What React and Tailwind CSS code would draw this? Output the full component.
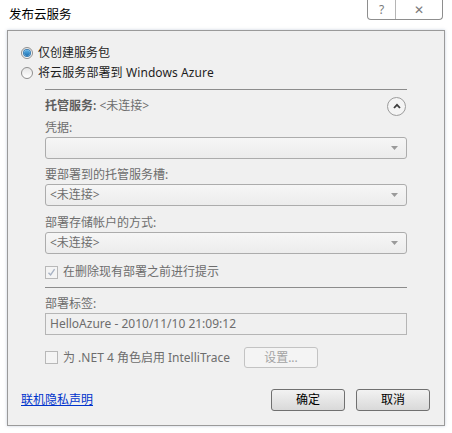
import React from "react";

const font = { fontFamily: '"Noto Sans", "Noto Sans CJK SC", sans-serif' };

function Radio({ checked }) {
  return (
    <span className="flex h-[12px] w-[12px] items-center justify-center rounded-full border border-[#8f8f8f] bg-gradient-to-b from-[#e6e6e6] to-[#ffffff]">
      {checked && (
        <span className="h-[6px] w-[6px] rounded-full bg-gradient-to-b from-[#5db3e8] to-[#1a6fb0] ring-1 ring-[#3a7fb5]" />
      )}
    </span>
  );
}

function Checkbox({ checked }) {
  return (
    <span className="flex h-[13px] w-[13px] items-center justify-center border border-[#b8b8b8] bg-[#f4f4f4]">
      {checked && (
        <svg width="9" height="9" viewBox="0 0 9 9">
          <path d="M1.5 4.8 L3.6 7 L7.6 1.2" fill="none" stroke="#a9b3c4" strokeWidth="1.4" />
        </svg>
      )}
    </span>
  );
}

function Select({ value }) {
  return (
    <div className="flex h-[22px] items-center justify-between rounded-[3px] border border-[#acacac] bg-gradient-to-b from-[#f6f6f6] to-[#ececec] pl-[4px] pr-[8px] text-[#6d6d6d]">
      <span>{value}</span>
      <svg width="7" height="4" viewBox="0 0 7 4">
        <path d="M0 0 H7 L3.5 4 Z" fill="#9a9a9a" />
      </svg>
    </div>
  );
}

export default function App() {
  return (
    <div className="relative h-[433px] w-[452px] bg-white text-[12px] leading-[18px]" style={font}>
      {/* title bar */}
      <div className="flex h-[30px] items-center pl-[9px] text-[12.5px] text-black">发布云服务</div>
      <div className="absolute right-[9px] top-0 flex h-[20px] w-[76px] rounded-b-[4px] border border-t-0 border-[#8e8e8e] bg-white text-[#7a7a7a]">
        <div className="flex w-[28px] items-center justify-center border-r border-[#b5b5b5] text-[12px]">?</div>
        <div className="flex flex-1 items-center justify-center text-[12px]">✕</div>
      </div>

      {/* client area */}
      <div className="absolute left-[7px] top-[30px] flex h-[396px] w-[438px] flex-col border border-[#9a9a9a] bg-[#f0f0f0] pl-[13px] pr-[14px] pt-[12px] shadow-[0_0_3px_rgba(120,140,170,0.4)]">
        <div className="flex h-[20px] items-center gap-[5px] text-[#1e1e1e]">
          <Radio checked />
          <span>仅创建服务包</span>
        </div>
        <div className="flex h-[20px] items-center gap-[5px] text-[#1e1e1e]">
          <Radio />
          <span className="tracking-[0.1px]">将云服务部署到 Windows Azure</span>
        </div>

        <div className="ml-[24px] w-[362px]">
          <div className="mt-[6px] h-px bg-[#8c8c8c]" />
          <div className="mt-[6px] flex h-[20px] items-center justify-between text-[#6d6d6d]">
            <span>
              <span className="font-semibold text-[#5e5e5e]">托管服务:</span> &lt;未连接&gt;
            </span>
            <span className="mr-[1px] flex h-[19px] w-[19px] items-center justify-center rounded-full border border-[#9c9c9c] bg-[#f4f4f4]">
              <svg width="8" height="6" viewBox="0 0 8 6">
                <path d="M1 5 L4 1.8 L7 5" fill="none" stroke="#3c3c3c" strokeWidth="1.8" />
              </svg>
            </span>
          </div>
          <div className="mt-[3px] text-[#6d6d6d]">凭据:</div>
          <Select value="" />
          <div className="mt-[7px] text-[#6d6d6d]">要部署到的托管服务槽:</div>
          <Select value="<未连接>" />
          <div className="mt-[8px] text-[#6d6d6d]">部署存储帐户的方式:</div>
          <Select value="<未连接>" />
          <div className="mt-[8px] flex h-[20px] items-center gap-[5px] text-[#6d6d6d]">
            <Checkbox checked />
            <span>在删除现有部署之前进行提示</span>
          </div>
          <div className="mt-[5px] h-px bg-[#8c8c8c]" />
          <div className="mt-[7px] text-[#6d6d6d]">部署标签:</div>
          <div className="flex h-[22px] items-center border border-[#b5b5b5] bg-[#f0f0f0] pl-[4px] text-[#6d6d6d]">
            HelloAzure - 2010/11/10 21:09:12
          </div>
        </div>

        <div className="ml-[24px] mt-[12px] flex h-[21px] items-center gap-[5px] text-[#6d6d6d]">
          <Checkbox />
          <span>为 .NET 4 角色启用 IntelliTrace</span>
          <span className="ml-[9px] flex h-[21px] w-[74px] items-center justify-center rounded-[3px] border border-[#c3c3c3] bg-[#f4f4f4] text-[#a3a3a3]">
            设置...
          </span>
        </div>

        <div className="mt-[21px] flex items-center justify-between">
          <a className="text-[#0033cc] underline">联机隐私声明</a>
          <div className="flex gap-[11px]">
            <button className="flex h-[22px] w-[74px] items-center justify-center rounded-[3px] border border-[#707070] bg-gradient-to-b from-[#f2f2f2] to-[#d9d9d9] text-black">
              确定
            </button>
            <button className="flex h-[22px] w-[74px] items-center justify-center rounded-[3px] border border-[#707070] bg-gradient-to-b from-[#f2f2f2] to-[#d9d9d9] text-black">
              取消
            </button>
          </div>
        </div>
      </div>
    </div>
  );
}
